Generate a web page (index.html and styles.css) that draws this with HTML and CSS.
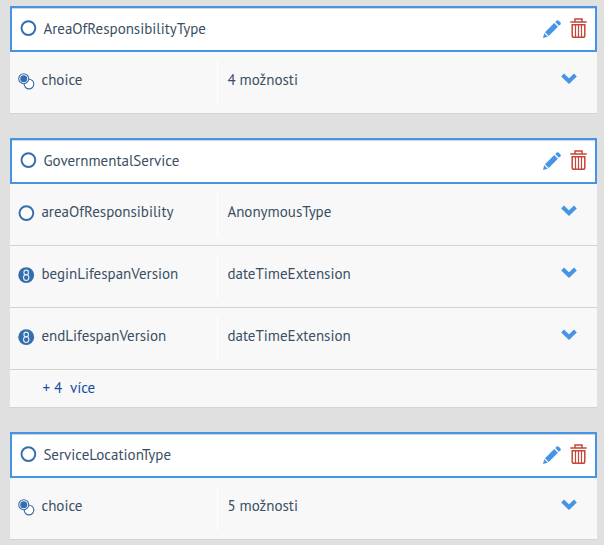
FILE: index.html
```
<!DOCTYPE html>
<html lang="cs">
<head>
<meta charset="utf-8">
<title>Typy</title>
<link rel="stylesheet" href="styles.css">
</head>
<body>
<svg class="defs" width="0" height="0">
  <symbol id="ring" viewBox="0 0 16 16"><circle cx="8.4" cy="8.1" r="6.9" fill="#fff" stroke="#346ead" stroke-width="1.9"/></symbol>
  <symbol id="choice" viewBox="0 0 16 16"><circle cx="11" cy="11.1" r="4.8" fill="#fff" stroke="#346ead" stroke-width="1.1"/><circle cx="5.7" cy="5.7" r="5" fill="#f8f8f8" stroke="#346ead" stroke-width="1.1"/><circle cx="5.7" cy="5.7" r="3.5" fill="#346ead"/></symbol>
  <symbol id="eight" viewBox="0 0 16 16"><circle cx="8.2" cy="8.2" r="7.9" fill="#346ead"/><g fill="none" stroke="#e6eff8" stroke-width="1.1"><ellipse cx="8.2" cy="5.4" rx="2.3" ry="2.3"/><ellipse cx="8.2" cy="10.6" rx="2.7" ry="2.9"/></g></symbol>
  <symbol id="pencil" viewBox="0 0 18 18"><g fill="#4594e5"><path d="M0 18 1.2 13.2 4.8 16.8Z"/><path d="M2 12.3 11.2 3.1 14.9 6.8 5.7 16Z"/><path d="M12.2 2.1 13.8 .5Q14.6-.2 15.4 .5L17.5 2.6Q18.2 3.4 17.5 4.2L15.9 5.8Z"/></g></symbol>
  <symbol id="trash" viewBox="0 0 17 20"><g fill="none" stroke="#c5463a"><path stroke-width="1.5" d="M.3 4H16.7M5 3.6V1.1H12V3.6"/><path stroke-width="1.5" d="M2.2 6.7H14.8V17.4Q14.8 19.2 13 19.2H4Q2.2 19.2 2.2 17.4Z"/><path stroke-width="1.2" d="M5.5 7V19M8.5 7V19M11.5 7V19"/></g></symbol>
  <symbol id="chevron" viewBox="0 0 16 11"><path d="M1.6 2 8 8.3 14.4 2" fill="none" stroke="#4594e5" stroke-width="4"/></symbol>
</svg>
<main class="list">
  <section class="card">
    <header class="head"><svg class="icon"><use href="#ring"/></svg><h2 class="title">AreaOfResponsibilityType</h2><svg class="pencil"><use href="#pencil"/></svg><svg class="trash"><use href="#trash"/></svg></header>
    <div class="row"><div class="name"><svg class="icon"><use href="#choice"/></svg><span class="label">choice</span></div><div class="type"><span class="label">4 možnosti</span><svg class="chevron"><use href="#chevron"/></svg></div></div>
  </section>
  <section class="card">
    <header class="head"><svg class="icon"><use href="#ring"/></svg><h2 class="title">GovernmentalService</h2><svg class="pencil"><use href="#pencil"/></svg><svg class="trash"><use href="#trash"/></svg></header>
    <div class="row"><div class="name"><svg class="icon"><use href="#ring"/></svg><span class="label">areaOfResponsibility</span></div><div class="type"><span class="label">AnonymousType</span><svg class="chevron"><use href="#chevron"/></svg></div></div>
    <div class="row"><div class="name"><svg class="icon"><use href="#eight"/></svg><span class="label">beginLifespanVersion</span></div><div class="type"><span class="label">dateTimeExtension</span><svg class="chevron"><use href="#chevron"/></svg></div></div>
    <div class="row"><div class="name"><svg class="icon"><use href="#eight"/></svg><span class="label">endLifespanVersion</span></div><div class="type"><span class="label">dateTimeExtension</span><svg class="chevron"><use href="#chevron"/></svg></div></div>
    <div class="more"><a class="link">+ 4&nbsp; více</a></div>
  </section>
  <section class="card">
    <header class="head"><svg class="icon"><use href="#ring"/></svg><h2 class="title">ServiceLocationType</h2><svg class="pencil"><use href="#pencil"/></svg><svg class="trash"><use href="#trash"/></svg></header>
    <div class="row"><div class="name"><svg class="icon"><use href="#choice"/></svg><span class="label">choice</span></div><div class="type"><span class="label">5 možnosti</span><svg class="chevron"><use href="#chevron"/></svg></div></div>
  </section>
</main>
</body>
</html>
```
FILE: styles.css
```
* { box-sizing: border-box; }
body {
  margin: 0;
  background: #e0e0e0;
  color: #3a4f64;
  font: 15px/20px "PT Sans", "Noto Sans", sans-serif;
}
svg { display: block; flex: none; overflow: visible; }
symbol { overflow: visible; }
.defs { position: absolute; }
.list { display: flex; flex-direction: column; gap: 24px; width: 587px; margin: 6px 0 0 10px; }
.card { background: #f8f8f8; }
.head {
  display: flex;
  align-items: center;
  height: 46px;
  padding: 0 8px;
  border: 2px solid #4594e5;
  background: #fff;
  box-shadow: inset 0 1px #d5d5d5;
}
.title { margin: 0 auto 0 7.4px; font: inherit; }
.icon { width: 16px; height: 16px; }
.head .icon { margin-top: -2px; }
.pencil { width: 18px; height: 18px; margin: 0 9px 0 0; }
.trash { width: 17px; height: 20px; margin-top: -2px; }
.row { display: flex; height: 62px; padding: 8px 0; border-bottom: 1px solid #d3d3d3; }
.name { display: flex; width: 207px; padding: 10px 0 0 8px; }
.name .icon { margin: 3px 7.4px 0 0; }
.type { display: flex; flex: 1; height: 45px; padding: 10px 20px 0 9.4px; border-left: 1px solid #fff; }
.chevron { width: 16px; height: 11px; margin: 3px 0 0 auto; }
.more { display: flex; height: 38px; padding: 8px 32.4px; border-bottom: 1px solid #d3d3d3; color: #174f9c; }
```
